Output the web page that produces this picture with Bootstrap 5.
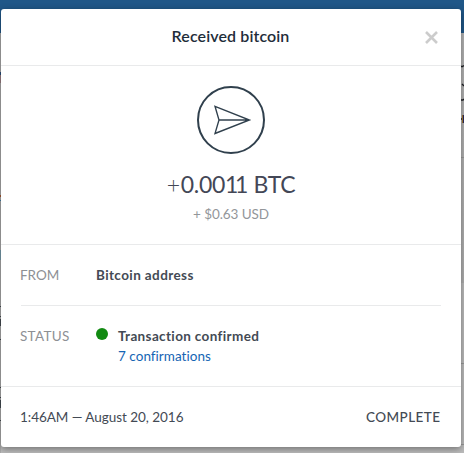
<!DOCTYPE html>
<html lang="en">
<head>
<meta charset="utf-8">
<meta name="viewport" content="width=device-width, initial-scale=1">
<title>Received bitcoin</title>
<link href="https://cdn.jsdelivr.net/npm/bootstrap@5.3.0/dist/css/bootstrap.min.css" rel="stylesheet">
<style>
html, body { height: 100%; overflow: hidden; }
body { font-family: Lato, "Open Sans", sans-serif; font-size: 13.5px; line-height: 20px; color: #434a54; font-variant-ligatures: none; background: linear-gradient(#205788 33px, #b4b4b4 33px, #b0b0b0 283px, #bcbcbc 283px); }
.page-edges { z-index: 0; }
.tx-card { z-index: 1; width: 460px; height: 438px; margin: 9px 0 0 1px; border-radius: 3px; box-shadow: 0 2px 7px rgba(0,0,0,.4); }
.line-b { border-bottom: 1px solid #e9eaeb; }
.line-t { border-top: 1px solid #e9eaeb; }
.tx-head { height: 57px; padding: 0 1px 2px 0; }
.tx-title { font-size: 16px; font-weight: 600; color: #1f2d3a; letter-spacing: .11px; }
.tx-close { right: 23px; top: 22px; line-height: 0; }
.tx-sum { height: 179px; padding-top: 19px; }
.tx-amount { font-size: 23px; line-height: 30px; margin-top: 14px; color: #434756; letter-spacing: -.3px; }
.tx-plus { font-weight: 300; margin-right: 1px; }
.tx-ones { letter-spacing: -3.4px; margin-right: 3px; }
.tx-fiat { color: #93969a; line-height: 20px; margin-top: 5px; letter-spacing: -.07px; }
.tx-details { height: 141px; padding: 0 20px; }
.tx-from { height: 61px; }
.tx-status { padding-top: 20px; }
.tx-label { width: 76px; margin-left: -1px; color: #8d9094; letter-spacing: -.05px; }
.tx-label-status { letter-spacing: .3px; }
.tx-dot { width: 12px; height: 12px; background: #128a12; margin: 2px 10px 0 0; }
.tx-link { color: #1665b4; letter-spacing: .03px; }
.tx-foot { height: 61px; padding: 0 21px 0 19px; }
.fit { white-space: nowrap; }
.t1 { letter-spacing: .4px; }
.t2 { letter-spacing: .36px; }
.tx-date { letter-spacing: -.04px; }
.tx-state { letter-spacing: .45px; margin-right: -.5px; }
</style>
</head>
<body>
<svg class="page-edges position-absolute top-0 start-0" width="464" height="453" shape-rendering="crispEdges">
<path fill="#aaa" d="M0 33h1v420H0z"/><path fill="#274d79" d="M0 72h1v3H0z"/><path fill="#997d83" d="M0 75h1v8H0z"/>
<path fill="#a4572f" d="M0 195h1v2H0z"/><path fill="#427ca5" d="M0 200h1v1H0z"/><path fill="#779cac" d="M0 250h1v10H0z"/>
<path fill="#444c52" d="M0 306h1v1H0zM0 316h1v1H0zM0 319h1v7H0zM0 339h1v1H0zM0 387h1v1H0zM0 397h1v1H0zM0 400h1v8H0zM0 420h1v1H0z"/>
<path fill="#999" d="M461 157h3v1h-3zM461 363h3v1h-3zM461 444h3v1h-3z"/>
</svg>
<main class="tx-card bg-white position-relative">
<header class="tx-head line-b d-flex justify-content-center align-items-center position-relative">
<h1 class="tx-title fit mb-0">Received bitcoin</h1>
<button type="button" class="tx-close btn p-0 border-0 position-absolute" aria-label="Close"><svg width="13" height="13" viewBox="0 0 13 13" fill="none" stroke="#ccc" stroke-width="2.6"><path d="M1 1l11 11M12 1L1 12"/></svg></button>
</header>
<section class="tx-sum line-b d-flex flex-column align-items-center">
<svg width="70" height="70" viewBox="0 0 70 70" fill="none" stroke="#30404d"><circle cx="35" cy="35" r="33" stroke-width="2"/><path d="M19 21.3L53.5 35 19 48.5 23 35zM23 35h30.5" stroke-width="1.35" stroke-linejoin="miter"/></svg>
<div class="tx-amount fit"><span class="tx-plus">+</span>0.00<span class="tx-ones">11</span> BTC</div>
<div class="tx-fiat fit">+ $0.63 USD</div>
</section>
<section class="tx-details">
<div class="tx-from line-b d-flex align-items-center"><span class="tx-label">FROM</span><strong class="fit t1">Bitcoin address</strong></div>
<div class="tx-status d-flex"><span class="tx-label tx-label-status">STATUS</span><span class="tx-dot rounded-circle"></span><div><strong class="fit d-block t2">Transaction confirmed</strong><a href="#" class="tx-link text-decoration-none fit">7 confirmations</a></div></div>
</section>
<footer class="tx-foot line-t d-flex justify-content-between align-items-center"><span class="fit tx-date">1:46AM — August 20, 2016</span><span class="fit fw-medium tx-state">COMPLETE</span></footer>
</main>
<svg class="page-edges position-absolute top-0 start-0 pe-none" width="464" height="453" fill="none" stroke="#1d1f24" stroke-width="1.3"><path d="M461 66.5h1.5l1.5-1M462 84l2 2M461 100h2l1-1M461 119h2"/><path d="M462.5 115v8" stroke="#a27734" stroke-width="1"/><path d="M463.5 115v8" stroke="#27265b" stroke-width="1"/></svg>
<script src="https://cdn.jsdelivr.net/npm/bootstrap@5.3.0/dist/js/bootstrap.bundle.min.js"></script>
</body>
</html>
